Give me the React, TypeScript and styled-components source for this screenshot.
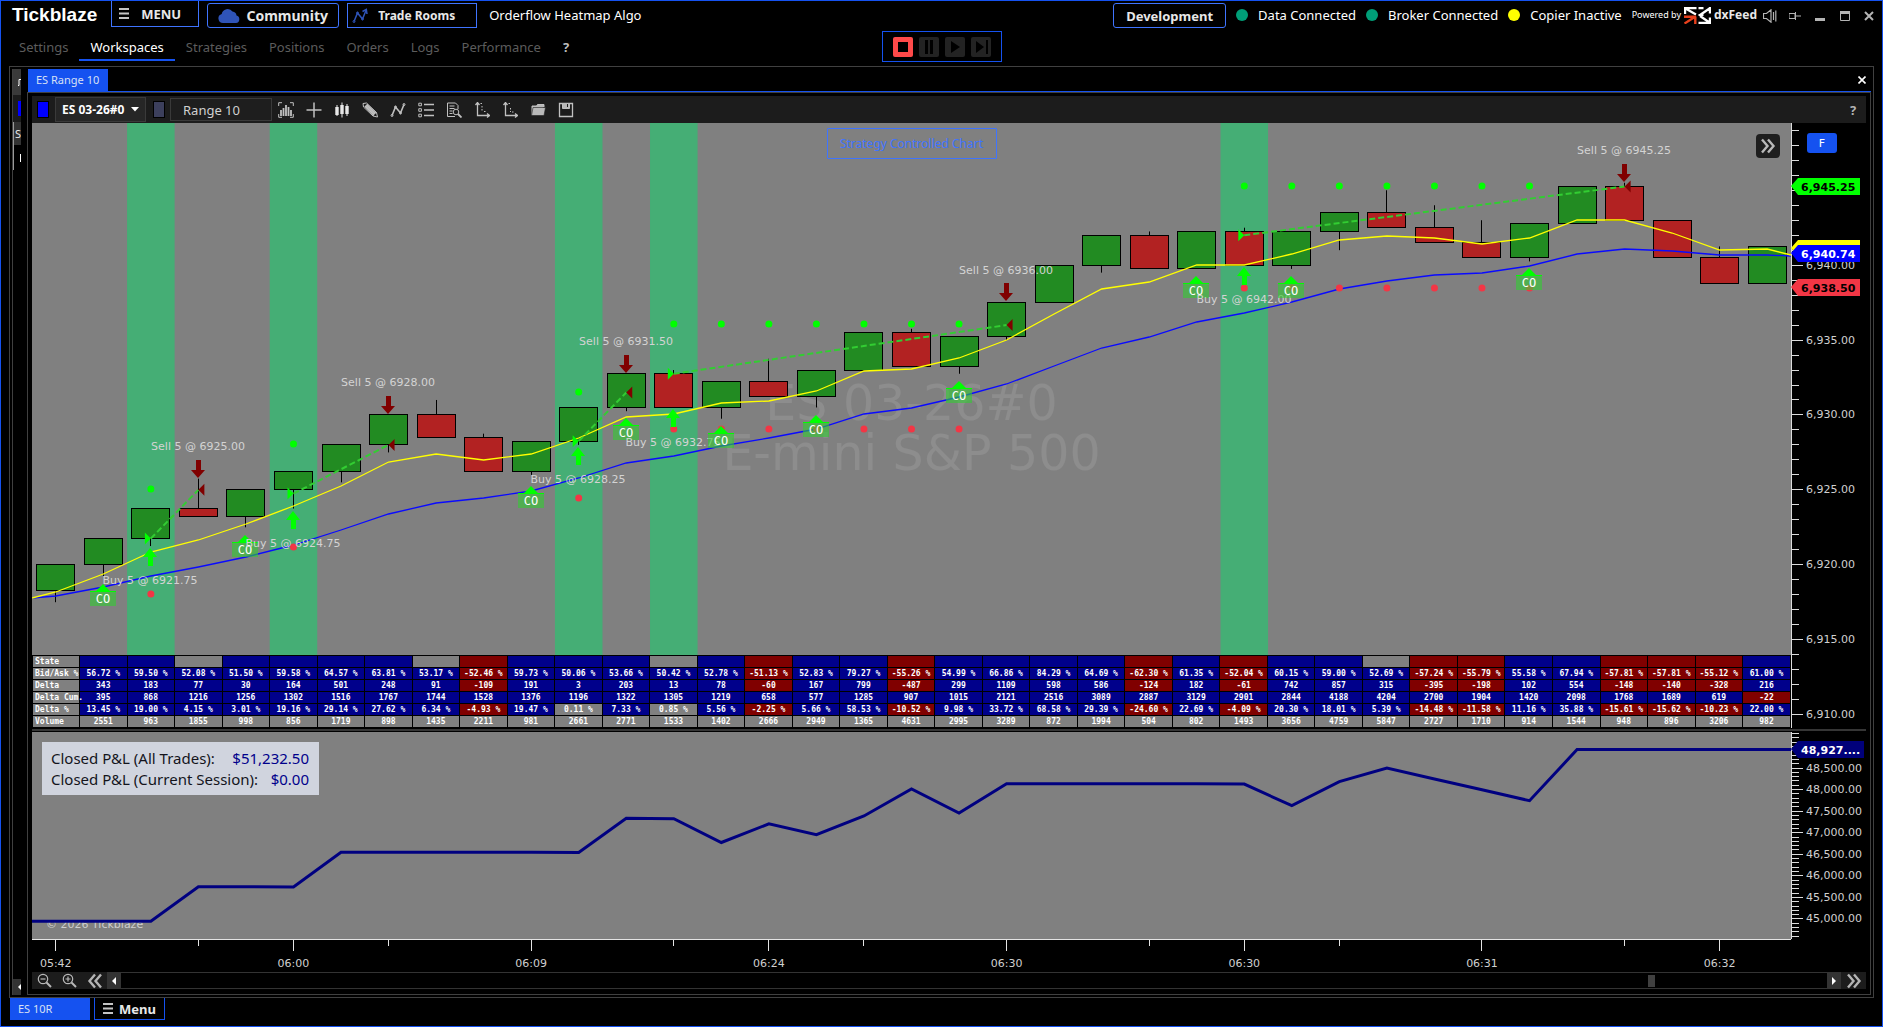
import React, { useLayoutEffect, useRef, useState } from "react";
import styled, { createGlobalStyle } from "styled-components";

const UI = `"Noto Sans", "Open Sans", sans-serif`;
const CHART = `"DejaVu Sans", Verdana, sans-serif`;
const BLUE = "#1552f0";
const EDGE = "#404040";

const GlobalStyle = createGlobalStyle`
  *, *::before, *::after { box-sizing: border-box; }
  body { margin: 0; background: #000; color: #e8e8e8; font: 13px/18px ${UI}; }
  button, input, select { font: inherit; color: inherit; margin: 0; }
  button { cursor: pointer; }
`;

/* ---------- window frame ---------- */

const Window = styled.div`
  display: flex;
  flex-direction: column;
  height: 100vh;
  min-width: 1200px;
  min-height: 600px;
  border: 1px solid ${BLUE};
  background: #000;
`;

const Header = styled.header`
  display: flex;
  align-items: flex-start;
  justify-content: space-between;
  height: 30px;
  padding: 0 3px 0 11px;
`;

const HeaderGroup = styled.div<{ $gap: number }>`
  display: flex;
  align-items: flex-start;
  gap: ${(p) => p.$gap}px;
`;

const Brand = styled.h1`
  margin: 0 6px 0 0;
  padding-top: 2px;
  font: bold 19px/24px "Liberation Sans", Arial, sans-serif;
  color: #fff;
`;

type HeaderButtonProps = { $size: number; $width: number; $gap?: number; $inset?: number; $radius?: number; $flush?: boolean };

const HeaderButton = styled.button<HeaderButtonProps>`
  display: flex;
  align-items: center;
  justify-content: ${(p) => (p.$inset ? "flex-start" : "center")};
  gap: ${(p) => p.$gap ?? 6}px;
  width: ${(p) => p.$width}px;
  height: ${(p) => (p.$flush ? 26 : 25)}px;
  margin-top: ${(p) => (p.$flush ? 0 : 2)}px;
  padding: 0 0 0 ${(p) => p.$inset ?? 0}px;
  border: 1px solid #3f74ff;
  border-top-width: ${(p) => (p.$flush ? 0 : 1)}px;
  border-radius: ${(p) => p.$radius ?? 0}px;
  background: #000;
  font-weight: 700;
  font-size: ${(p) => p.$size}px;
  white-space: nowrap;
`;

const Title = styled.span`
  padding: 5px 0 0 4px;
  color: #fff;
  white-space: nowrap;
`;

const Status = styled.span`
  display: flex;
  align-items: center;
  gap: 10px;
  height: 28px;
  color: #fff;
  white-space: nowrap;
`;

const Dot = styled.i<{ $color: string }>`
  width: 12px;
  height: 12px;
  border-radius: 50%;
  background: ${(p) => p.$color};
`;

const Powered = styled.span`
  display: flex;
  align-items: center;
  gap: 3px;
  height: 28px;
  font-size: 9px;
  color: #fff;
  white-space: nowrap;
  b { font-size: 12px; color: #e8e8e8; }
`;

const FeedGroup = styled.div`
  display: flex;
  gap: 2px;
`;

const WindowButtons = styled.div`
  display: flex;
  height: 30px;
`;

const GlyphButton = styled.button<{ $width: number }>`
  display: flex;
  align-items: center;
  justify-content: center;
  width: ${(p) => p.$width}px;
  padding: 0;
  border: 0;
  background: transparent;
  color: #b4b4b4;
`;

const NavRow = styled.div`
  display: grid;
  grid-template-columns: 1fr auto 1fr;
  height: 35px;
`;

const Nav = styled.nav`
  display: flex;
  align-items: flex-start;
  padding: 2px 0 0 7px;
`;

const NavLink = styled.a<{ $active?: boolean; $strong?: boolean }>`
  padding: 5px 11px 3px;
  border-bottom: 2px solid ${(p) => (p.$active ? BLUE : "transparent")};
  color: ${(p) => (p.$active ? "#fff" : p.$strong ? "#bdbdbd" : "#5c5c5c")};
  font-weight: ${(p) => (p.$strong ? 700 : 400)};
  text-decoration: none;
`;

const Transport = styled.div`
  display: flex;
  gap: 6px;
  height: 31px;
  padding: 5px 10px;
  border: 1px solid ${BLUE};
`;

const TransportButton = styled.button<{ $live?: boolean }>`
  width: 20px;
  height: 20px;
  padding: 0;
  border: 0;
  border-radius: 2px;
  background: ${(p) => (p.$live ? "#ff4a4a" : "#232323")};
  svg { display: block; }
`;

const Workspace = styled.main`
  display: flex;
  flex: 1;
  gap: 6px;
  min-height: 0;
  margin: 0 8px;
  padding: 2px;
  border: 1px solid ${EDGE};
`;

/* ---------- window tucked behind the chart ---------- */

const Behind = styled.aside`
  display: flex;
  flex-direction: column;
  width: 9px;
  overflow: hidden;
  border-left: 1px solid ${EDGE};
`;

const BehindCell = styled.div<{ $height: number; $bg: string; $line?: boolean }>`
  display: flex;
  align-items: center;
  justify-content: flex-end;
  height: ${(p) => p.$height}px;
  overflow: hidden;
  background: ${(p) => p.$bg};
  border-left: 1px solid ${(p) => (p.$line ? "#9a9a9a" : "transparent")};
  font-size: 11px;
`;

const BehindSwatch = styled.i`
  width: 3px;
  height: 15px;
  background: #00f;
`;

const BehindSpacer = styled.div`
  flex: 1;
`;

/* ---------- chart window ---------- */

const ChartWindow = styled.section`
  display: flex;
  flex: 1;
  flex-direction: column;
  min-width: 0;
`;

const TabBar = styled.div`
  display: flex;
  justify-content: space-between;
  height: 23px;
  margin-left: 1px;
  border-bottom: 1px solid ${BLUE};
`;

const Tab = styled.button<{ $width: number }>`
  width: ${(p) => p.$width}px;
  height: 22px;
  padding: 0 8px;
  border: 0;
  background: ${BLUE};
  color: #d8e0f4;
  font-size: 11px;
  text-align: left;
  white-space: nowrap;
`;

const ChartBody = styled.div`
  display: flex;
  flex: 1;
  flex-direction: column;
  min-height: 0;
  padding: 3px 4px 5px;
  border: 1px solid ${EDGE};
`;

const Toolbar = styled.div`
  display: flex;
  align-items: center;
  height: 27px;
  padding-left: 5px;
  background: #1c1c1c;
`;

const Swatch = styled.button<{ $color: string }>`
  width: 12px;
  height: 17px;
  padding: 0;
  border: 1px solid #000;
  background: ${(p) => p.$color};
`;

const SymbolBox = styled.label`
  display: flex;
  align-items: center;
  width: 91px;
  height: 25px;
  margin: 0 7px 0 6px;
  padding: 0 6px;
  border: 1px solid #3a3a3a;
  background: #262626;
  font-size: 12px;
`;

const SymbolSelect = styled.select`
  flex: 1;
  min-width: 0;
  padding: 0;
  border: 0;
  appearance: none;
  background: transparent;
  color: #fff;
  font-weight: 700;
`;

const RangeInput = styled.input`
  width: 102px;
  height: 23px;
  margin-left: 5px;
  padding: 0 12px;
  border: 1px solid #3a3a3a;
  background: #1e1e1e;
  color: #d0d0d0;
`;

const Tools = styled.div`
  display: flex;
  flex: 1;
  height: 100%;
`;

const Panes = styled.div`
  display: flex;
  flex: 1;
  flex-direction: column;
  min-height: 0;
`;

const Pane = styled.div<{ $grow: number }>`
  display: flex;
  flex: ${(p) => p.$grow} 1 0px;
  min-height: 0;
`;

const PlotColumn = styled.div`
  display: flex;
  flex: 1;
  flex-direction: column;
  min-width: 0;
`;

const Plot = styled.div`
  position: relative;
  flex: 1 1 0px;
  min-height: 0;
  overflow: hidden;
  background: #808080;
`;

const AxisBox = styled.div`
  position: relative;
  width: 75px;
  overflow: hidden;
`;

const Canvas = styled.svg`
  display: block;
  width: 100%;
  height: 100%;
  font: 11px ${CHART};
`;

const Splitter = styled.div`
  height: 4px;
  border: solid #000;
  border-width: 1px 0;
  background: #363636;
`;

const TimeAxis = styled.div`
  height: 33px;
  margin-right: 75px;
`;

const StrategyButton = styled.button`
  position: absolute;
  top: 5px;
  left: 50%;
  width: 170px;
  height: 31px;
  padding: 0;
  border: 1px solid #3f74ff;
  border-radius: 1px;
  background: transparent;
  color: #3f74ff;
  font-size: 12px;
  transform: translateX(-50%);
`;

const ExpandButton = styled.button`
  position: absolute;
  top: 11px;
  right: 11px;
  width: 24px;
  height: 24px;
  padding: 4px;
  border: 0;
  border-radius: 4px;
  background: #1e1e1e;
  color: #b8b8b8;
  svg { display: block; }
`;

const FixedButton = styled.button`
  position: absolute;
  top: 10px;
  left: 16px;
  width: 30px;
  height: 20px;
  padding: 0;
  border: 0;
  border-radius: 3px;
  background: ${BLUE};
  color: #fff;
  font-size: 11px;
`;

const Summary = styled.dl`
  position: absolute;
  top: 10px;
  left: 10px;
  width: 277px;
  margin: 0;
  padding: 6px 10px 5px 9px;
  background: #d0d4de;
  font-size: 15px;
  line-height: 21px;
`;

const SummaryRow = styled.div`
  display: flex;
  justify-content: space-between;
  color: #14141c;
  dd { margin: 0; color: #00008b; }
`;

const FlowTable = styled.table`
  width: 100%;
  table-layout: fixed;
  border-collapse: collapse;
  background: #000;
  color: #fff;
  font: bold 8px/11px "DejaVu Sans Mono", "Liberation Mono", monospace;
`;

const RowLabel = styled.th`
  width: 47px;
  height: 12px;
  padding: 0 0 0 2px;
  border: 1px solid #000;
  background: #808080;
  text-align: left;
  white-space: nowrap;
`;

const FlowCell = styled.td<{ $bg: string }>`
  height: 12px;
  padding: 0;
  border: 1px solid #000;
  background: ${(p) => p.$bg};
  text-align: center;
  white-space: nowrap;
`;

const ScrollRow = styled.div`
  display: flex;
  height: 17px;
  background: #1c1c1c;
`;

const ScrollTrack = styled.div`
  display: flex;
  flex: 1;
  align-items: center;
  justify-content: flex-end;
  padding-right: 172px;
  border: solid #333;
  border-width: 1px 0;
  background: #000;
`;

const ScrollThumb = styled.i`
  width: 7px;
  height: 12px;
  background: #404040;
`;

const Arrow = styled(GlyphButton)`
  background: #333;
  color: #fff;
`;

const Footer = styled.footer`
  display: flex;
  align-items: flex-start;
  gap: 4px;
  height: 28px;
  padding-left: 9px;
`;

const FooterMenu = styled.button`
  display: flex;
  align-items: center;
  justify-content: center;
  gap: 6px;
  width: 71px;
  height: 22px;
  padding: 0;
  border: 1px solid ${BLUE};
  border-top: 0;
  background: #000;
  font-weight: 700;
`;

/* ---------- data ---------- */

const COLUMNS = 37;
const TOP_PRICE = 6949.49;
const PX_PER_POINT = 14.98;
const TOP_PNL = 49334.5;
const PX_PER_DOLLAR = 0.04314;

const priceY = (price: number) => (TOP_PRICE - price) * PX_PER_POINT;
const pnlY = (value: number) => (TOP_PNL - value) * PX_PER_DOLLAR;

type Candle = { up: boolean; top: number; bottom: number; high?: number; low?: number };

const g = (top: number, bottom: number, low?: number): Candle => ({ up: true, top, bottom, low });
const r = (top: number, bottom: number, high?: number): Candle => ({ up: false, top, bottom, high });

const candles: Candle[] = [
  g(6920, 6918.25, 6917.5), g(6921.75, 6920, 6919.25), g(6923.75, 6921.75, 6921.25),
  r(6923.75, 6923.25, 6925.75), g(6925, 6923.25, 6922.5), g(6926.25, 6925, 6923.75),
  g(6928, 6926.25, 6925.5), g(6930, 6928, 6927.5), r(6930, 6928.5, 6931),
  r(6928.5, 6926.25, 6928.75), g(6928.25, 6926.25, 6926), g(6930.5, 6928.25, 6928),
  g(6932.75, 6930.5, 6930.25), r(6932.75, 6930.5, 6933), g(6932.25, 6930.5, 6929.75),
  r(6932.25, 6931.25, 6933.75), g(6933, 6931.25, 6930.5), g(6935.5, 6933),
  r(6935.5, 6933.25, 6935.75), g(6935.25, 6933.25, 6932.75), g(6937.5, 6935.25, 6935),
  g(6940, 6937.5), g(6942, 6940, 6939.5), r(6942, 6939.75, 6942.25),
  g(6942.25, 6939.75), r(6942.25, 6940, 6942.5), g(6942.25, 6940, 6939.75),
  g(6943.5, 6942.25, 6941), r(6943.5, 6942.5, 6945), r(6942.5, 6941.5, 6944),
  r(6941.5, 6940.5, 6943), g(6942.75, 6940.5, 6940.25), g(6945.25, 6942.75),
  r(6945.25, 6943, 6945.5), r(6943, 6940.5), r(6940.5, 6938.75, 6941.25),
  g(6941.25, 6938.75),
];

/* averages, in pixels below the top price; first and last points sit on the pane edges */
const fastAverage = [475, 469, 451, 429, 417, 401, 383, 363, 339, 331, 337, 331, 315, 294, 291, 280, 278, 268, 248, 246, 235, 217, 191, 166, 159, 142, 142, 131, 117, 113, 115, 121, 115, 97, 97, 110, 127, 126, 132];
const slowAverage = [475, 473, 464, 453, 444, 434, 422, 407, 391, 380, 375, 368, 355, 340, 333, 323, 315, 306, 291, 285, 274, 261, 243, 225, 214, 199, 190, 179, 166, 158, 152, 150, 143, 131, 126, 128, 132, 132, 133];

const trades = [
  { from: 2, entry: 6921.75, to: 3, exit: 6925 },
  { from: 5, entry: 6924.75, to: 7, exit: 6928 },
  { from: 11, entry: 6928.25, to: 12, exit: 6931.5 },
  { from: 13, entry: 6932.75, to: 20, exit: 6936 },
  { from: 25, entry: 6942, to: 33, exit: 6945.25 },
];

type Mark = { kind: "buy" | "sell" | "co"; at: number; y: number; label?: string; labelY?: number };

const marks: Mark[] = [
  { kind: "co", at: 1, y: 461 },
  { kind: "buy", at: 2, y: 425, label: "Buy 5 @ 6921.75", labelY: 457 },
  { kind: "sell", at: 3, y: 337, label: "Sell 5 @ 6925.00", labelY: 323 },
  { kind: "co", at: 4, y: 412 },
  { kind: "buy", at: 5, y: 388, label: "Buy 5 @ 6924.75", labelY: 420 },
  { kind: "sell", at: 7, y: 273, label: "Sell 5 @ 6928.00", labelY: 259 },
  { kind: "co", at: 10, y: 363 },
  { kind: "buy", at: 11, y: 324, label: "Buy 5 @ 6928.25", labelY: 356 },
  { kind: "sell", at: 12, y: 232, label: "Sell 5 @ 6931.50", labelY: 218 },
  { kind: "co", at: 12, y: 295 },
  { kind: "buy", at: 13, y: 286, label: "Buy 5 @ 6932.75", labelY: 319 },
  { kind: "co", at: 14, y: 303 },
  { kind: "co", at: 16, y: 292 },
  { kind: "co", at: 19, y: 258 },
  { kind: "sell", at: 20, y: 160, label: "Sell 5 @ 6936.00", labelY: 147 },
  { kind: "co", at: 24, y: 153 },
  { kind: "buy", at: 25, y: 144, label: "Buy 5 @ 6942.00", labelY: 176 },
  { kind: "co", at: 26, y: 153 },
  { kind: "co", at: 31, y: 145 },
  { kind: "sell", at: 33, y: 41, label: "Sell 5 @ 6945.25", labelY: 27 },
];

const span = (a: number, b: number) => Array.from({ length: b - a + 1 }, (_, i) => a + i);
const targets: [number, number][] = [[2, 366], [5, 321], [11, 269], ...span(13, 19).map((i): [number, number] => [i, 201]), ...span(25, 31).map((i): [number, number] => [i, 63])];
const stops: [number, number][] = [[2, 471], [5, 424], [11, 375], ...span(13, 19).map((i): [number, number] => [i, 306]), ...span(25, 31).map((i): [number, number] => [i, 165])];

const pnl = [44946, 44946, 44946, 45746, 45746, 45740, 46548, 46548, 46548, 46548, 46548, 46540, 47334, 47325, 46773, 47206, 46956, 47387, 48013, 47457, 48134, 48134, 48134, 48134, 48134, 48127, 47626, 48183, 48500, 48247, 47995, 47742, 48927.5, 48927.5, 48927.5, 48927.5, 48927.5];

const bidAsk = "56.72 59.50 52.08 51.50 59.58 64.57 63.81 53.17 -52.46 59.73 50.06 53.66 50.42 52.78 -51.13 52.83 79.27 -55.26 54.99 66.86 84.29 64.69 -62.30 61.35 -52.04 60.15 59.00 52.69 -57.24 -55.79 55.58 67.94 -57.81 -57.81 -55.12 61.00".split(" ");
const delta = "343 183 77 30 164 501 248 91 -109 191 3 203 13 78 -60 167 799 -487 299 1109 598 586 -124 182 -61 742 857 315 -395 -198 102 554 -148 -140 -328 216".split(" ");
const deltaCum = "395 868 1216 1256 1302 1516 1767 1744 1528 1376 1196 1322 1305 1219 658 577 1285 907 1015 2121 2516 3089 2887 3129 2901 2844 4188 4204 2700 1904 1420 2098 1768 1689 619 -22".split(" ");
const deltaPct = "13.45 19.00 4.15 3.01 19.16 29.14 27.62 6.34 -4.93 19.47 0.11 7.33 0.85 5.56 -2.25 5.66 58.53 -10.52 9.98 33.72 68.58 29.39 -24.60 22.69 -4.09 20.30 18.01 5.39 -14.48 -11.58 11.16 35.88 -15.61 -15.62 -10.23 22.00".split(" ");
const volume = "2551 963 1855 998 856 1719 898 1435 2211 981 2661 2771 1533 1402 2666 2949 1365 4631 2995 3289 872 1994 504 802 1493 3656 4759 5847 2727 1710 914 1544 948 896 3206 982".split(" ");
const neutralStates = [2, 7, 12, 27];

const GREY = "#808080";
const signColor = (v: string) => (v.startsWith("-") ? "#800000" : "#00008b");

const flowRows = [
  { name: "State", cells: bidAsk.map((v, i) => ({ text: "", bg: neutralStates.includes(i) ? GREY : signColor(v) })) },
  { name: "Bid/Ask %", cells: bidAsk.map((v) => ({ text: `${v} %`, bg: signColor(v) })) },
  { name: "Delta", cells: delta.map((v) => ({ text: v, bg: signColor(v) })) },
  { name: "Delta Cum.", cells: deltaCum.map((v) => ({ text: v, bg: signColor(v) })) },
  { name: "Delta %", cells: deltaPct.map((v) => ({ text: `${v} %`, bg: Math.abs(Number(v)) < 1 ? GREY : signColor(v) })) },
  { name: "Volume", cells: volume.map((v) => ({ text: v, bg: GREY })) },
];

const times = ["05:42", "06:00", "06:09", "06:24", "06:30", "06:30", "06:31", "06:32"];
const minorTimes = [3, 7, 13, 17, 23, 27, 33];

/* ---------- helpers ---------- */

function useSize<T extends HTMLElement>() {
  const ref = useRef<T>(null);
  const [size, setSize] = useState({ w: 0, h: 0 });
  useLayoutEffect(() => {
    const el = ref.current;
    if (!el) return;
    const read = () => setSize({ w: el.clientWidth, h: el.clientHeight });
    read();
    const observer = new ResizeObserver(read);
    observer.observe(el);
    return () => observer.disconnect();
  }, []);
  return { ref, ...size };
}

const columnX = (width: number) => (i: number) => ((i + 0.5) * width) / COLUMNS;
const snap = (v: number) => Math.round(v) + 0.5;
const commas = (v: number) => v.toLocaleString("en-US", { minimumFractionDigits: 2 });

/* ---------- icons ---------- */

const Bars = () => (
  <svg width="10" height="11" viewBox="0 0 10 11" aria-hidden>
    <path d="M0 1h10M0 5.500h10M0 10h10" stroke="#c4c4c4" strokeWidth="2" />
  </svg>
);

const Cloud = () => (
  <svg width="22" height="15" viewBox="0 0 22 15" aria-hidden>
    <path d="M5 15a4.600 4.600 0 0 1-1.300-9A6 6 0 0 1 14.500 3.500 4.600 4.600 0 0 1 18.500 7.400 3.900 3.900 0 0 1 18 15z" fill="#2f54b8" />
  </svg>
);

const Zigzag = ({ color }: { color: string }) => (
  <svg width="16" height="16" viewBox="0 0 16 16" fill="none" stroke={color} aria-hidden>
    <path d="M2 13.500 5.500 5l5 6L14 2.500" strokeWidth="1.500" />
    <path d="M10.500 3.500 14.300 1.500 15 6" strokeWidth="1.500" />
    <circle cx="2" cy="13.500" r="1" /><circle cx="5.500" cy="5" r="1" /><circle cx="10.500" cy="11" r="1" />
  </svg>
);

const FeedLogo = () => (
  <svg width="27" height="17" viewBox="0 0 27 17" aria-hidden>
    <g fill="none" stroke="#fff" strokeWidth="2.200">
      <path d="M0 1.100h12.500M1.100 1v6M1.500 1.500l10.500 6" />
      <path d="M14.500 1.100h5M25.900 0v6.500M25.500 1.500 16 8M14.500 8h5M16 9l9.500 6.500M25.900 10.500V17M14.500 15.900h11" />
    </g>
    <path d="M.5 16.500 11.500 9.500M0 9.800h12M11.300 9.500V17" fill="none" stroke="#e8401c" strokeWidth="2.400" />
  </svg>
);

const Speaker = () => (
  <svg width="14" height="14" viewBox="0 0 14 14" fill="none" stroke="#b4b4b4" strokeWidth="1.200" aria-hidden>
    <path d="M.5 4.500h3L8 .8v12.400L3.500 9.500h-3zM10.500 3v8M12.800 1.500v11" />
  </svg>
);

const ChevronsRight = ({ flip }: { flip?: boolean }) => (
  <svg width="16" height="16" viewBox="0 0 16 16" fill="none" stroke="currentColor" strokeWidth="2.400" aria-hidden>
    <path d={flip ? "M8 1.500 2.500 8 8 14.500M14 1.500 8.500 8l5.500 6.500" : "M2 1.500 7.500 8 2 14.500M8 1.500 13.500 8 8 14.500"} />
  </svg>
);

const Magnifier = ({ plus }: { plus?: boolean }) => (
  <svg width="15" height="15" viewBox="0 0 15 15" fill="none" stroke="#b8b8b8" aria-hidden>
    <circle cx="6" cy="6" r="4.700" strokeWidth="1.200" />
    <path d="m9.500 9.500 4.500 4.500" strokeWidth="2" />
    <path d={plus ? "M3.500 6h5M6 3.500v5" : "M3.500 6h5"} strokeWidth="1.200" />
  </svg>
);

const toolIcons: { name: string; art: React.ReactNode }[] = [
  { name: "Chart style", art: <><path d="M.7 4V.7H4M12 .7h3.300V4M.7 12v3.300H4M12 15.300h3.300V12" /><path d="M3 14V8M5.500 14V6M8 14V3M10.500 14V5M13 14V8" strokeWidth="1.800" /></> },
  { name: "Crosshair", art: <path d="M8 .5v15M.5 8h15" strokeWidth="1.500" /> },
  { name: "Bars", art: <g stroke="#e8e8e8"><path d="M3 3v11M8 .5v15M13 2v12" /><path d="M3 5v8M8 3v9M13 4v8" strokeWidth="3.400" /></g> },
  { name: "Draw", art: <><path d="M1 1.500 4.500 1l10 9.500 1 4.500-4.500-1L1.500 5z" /><path d="m3 4 9 9M4.500 2.500l9 9" strokeWidth="2" /><path d="M11 14c0-2 2-3.500 3.500-3.500" /></> },
  { name: "Indicators", art: <><path d="M2 13.500 5.500 5l5 6L14 2.500" strokeWidth="1.600" /><circle cx="2" cy="13.500" r="1" /><circle cx="5.500" cy="5" r="1" /><circle cx="10.500" cy="11" r="1" /><circle cx="14" cy="2.500" r="1" /></> },
  { name: "Object list", art: <><path d="M6 2.500h10M6 8h10M6 13.500h10" strokeWidth="1.500" /><path d="M.8 1.200h2.600v2.600H.8zM.8 6.700h2.600v2.600H.8zM.8 12.200h2.600v2.600H.8z" /></> },
  { name: "Data box", art: <><path d="M12 7V3.500L9.500 1H1.500v13.500H9" /><path d="M3.500 4h5M3.500 6.500h5M3.500 9h3M3.500 11.500h3" /><circle cx="10" cy="10" r="2.800" /><path d="m12 12 3.500 3.500" strokeWidth="1.800" /></> },
  { name: "Fit axis", art: <><path d="M3.500 1v12.500H15M1.500 3l2-2.500 2 2.500M13 11.500l2.500 2-2.500 2" strokeWidth="1.300" /><path d="M6.500 1.500H9M8 4v5M10 9.500h3" strokeDasharray="1.500 1.500" /></> },
  { name: "Lock axis", art: <><path d="M3.500 1v12.500H15M1.500 3l2-2.500 2 2.500M13 11.500l2.500 2-2.500 2" strokeWidth="1.300" /><path d="M6.500 1.500H9M8.500 6v4M10 10h3" strokeDasharray="1.500 1.500" /></> },
  { name: "Open", art: <><path d="M2 13V4h4.500l1-1.500H14V5" fill="#b8b8b8" /><path d="M1.500 13.500 3 5.500h12.500l-1.500 8z" fill="#b8b8b8" stroke="#1c1c1c" strokeWidth="0.600" /></> },
  { name: "Save", art: <><path d="M1.500 1.500h13v13h-13z" strokeWidth="1.300" /><path d="M4.500 1.500v5h7v-5" fill="#b8b8b8" /><path d="M9.500 2v3" stroke="#1c1c1c" /></> },
];

/* ---------- price pane ---------- */

const MarkShape = ({ mark, x }: { mark: Mark; x: number }) => {
  if (mark.kind === "co") {
    return (
      <g>
        <rect x={x - 13} y={mark.y + 7} width="26" height="15" fill="#32cd32" fillOpacity="0.6" />
        <path d={`M${x} ${mark.y}l7 7h6v1h-26v-1h6z`} fill="#0f0" />
        <text x={x} y={mark.y + 19} fill="#fff" textAnchor="middle" fontFamily="DejaVu Sans Mono, monospace" fontSize="12">CO</text>
      </g>
    );
  }
  const buy = mark.kind === "buy";
  return (
    <g>
      <path
        d={buy ? `M${x} ${mark.y}l7 9h-4v9h-5v-9h-5z` : `M${x - 2} ${mark.y}h5v10h4l-7 8-7-8h5z`}
        fill={buy ? "#0f0" : "#800000"}
      />
      <text x={x} y={(mark.labelY ?? 0) + 4} fill="#d3d3d3" textAnchor="middle">{mark.label}</text>
    </g>
  );
};

const PricePlot = () => {
  const { ref, w } = useSize<HTMLDivElement>();
  const x = columnX(w);
  const column = w / COLUMNS;
  const line = (ys: number[]) =>
    ys.map((y, i) => `${i === 0 ? 0 : i === ys.length - 1 ? w : x(i - 1)},${y}`).join(" ");
  return (
    <Plot ref={ref}>
      <Canvas role="img" aria-label="ES 03-26 range chart">
        {trades.map((t) => (
          <rect key={t.from} x={x(t.from) - column / 2} width={column} height="100%" fill="#45ae75" />
        ))}
        <g fill="#fff" fillOpacity="0.1" fontSize="49" textAnchor="middle">
          <text x={w / 2} y="297">ES 03-26#0</text>
          <text x={w / 2} y="347">E-mini S&amp;P 500</text>
        </g>
        {candles.map((c, i) => {
          const cx = snap(x(i) - 0.5);
          const top = snap(priceY(c.top) - 0.5);
          const bottom = snap(priceY(c.bottom) - 0.5);
          return (
            <g key={i} stroke="#000">
              {c.high && <path d={`M${cx} ${priceY(c.high)}V${top}`} />}
              {c.low && <path d={`M${cx} ${bottom}V${priceY(c.low)}`} />}
              <rect x={cx - 19} y={top} width="38" height={bottom - top} fill={c.up ? "#228b22" : "#b22222"} />
            </g>
          );
        })}
        <polyline points={line(slowAverage)} fill="none" stroke="#0a0aff" strokeWidth="1.300" />
        <polyline points={line(fastAverage)} fill="none" stroke="#ff0" strokeWidth="1.300" />
        {targets.map(([i, y]) => <circle key={i} cx={x(i)} cy={y} r="3.500" fill="#0f0" />)}
        {stops.map(([i, y]) => <circle key={i} cx={x(i)} cy={y} r="3.500" fill="#f23645" />)}
        {trades.map((t) => {
          const y1 = priceY(t.entry);
          const y2 = priceY(t.exit);
          return (
            <g key={t.from}>
              <path d={`M${x(t.from)} ${y1}L${x(t.to)} ${y2}`} stroke="#32cd32" strokeWidth="2" strokeDasharray="6 3" />
              <path d={`M${x(t.from) - 6} ${y1 - 6}l6 6-6 6z`} fill="#0f0" />
              <path d={`M${x(t.to) + 6} ${y2 - 6}l-6 6 6 6z`} fill="#800000" />
            </g>
          );
        })}
        {marks.map((m, i) => <MarkShape key={i} mark={m} x={Math.floor(x(m.at))} />)}
      </Canvas>
      <StrategyButton type="button">Strategy Controlled Chart</StrategyButton>
      <ExpandButton type="button" aria-label="Expand"><ChevronsRight /></ExpandButton>
    </Plot>
  );
};

type BadgeProps = { y: number; text?: string; fill: string; color?: string; width?: number };

const Badge = ({ y, text, fill, color, width = 69 }: BadgeProps) => (
  <g>
    <path d={`M0 ${y}l7-8H${width}v17H7z`} fill={fill} />
    {text && <text x="10" y={y + 5} fill={color} fontWeight="bold">{text}</text>}
  </g>
);

type AxisProps = { step: number; labelStep: number; last: number; toY: (v: number) => number; from: number; children: React.ReactNode };

const Axis = ({ step, labelStep, last, toY, from, children }: AxisProps) => {
  const { ref, h } = useSize<HTMLDivElement>();
  const ticks: number[] = [];
  for (let v = from; v >= last && toY(v) < h - 1; v -= step) ticks.push(v);
  return (
    <AxisBox ref={ref}>
      <Canvas aria-label="Value scale">
        <path d={`M.5 0V${h}`} stroke="#dcdcdc" />
        {ticks.map((v) => {
          const y = snap(toY(v) - 0.5);
          const major = v % labelStep === 0;
          return (
            <g key={v}>
              <path d={`M1 ${y}h${major ? 11 : 7}`} stroke="#dcdcdc" />
              {major && <text x="15" y={Math.round(y) + 3} fill="#d0d0d0">{commas(v)}</text>}
            </g>
          );
        })}
        {children}
      </Canvas>
    </AxisBox>
  );
};

/* ---------- profit pane ---------- */

const ProfitPlot = () => {
  const { ref, w } = useSize<HTMLDivElement>();
  const x = columnX(w);
  const points = [`0,${pnlY(pnl[0])}`, ...pnl.map((v, i) => `${x(i)},${pnlY(v)}`), `${w},${pnlY(pnl[pnl.length - 1])}`];
  return (
    <Plot ref={ref}>
      <Canvas role="img" aria-label="Closed profit and loss">
        <text x="14" y="196" fill="#cfcfcf">© 2026 Tickblaze</text>
        <polyline points={points.join(" ")} fill="none" stroke="#000080" strokeWidth="3" />
      </Canvas>
      <Summary>
        <SummaryRow><dt>Closed P&amp;L (All Trades):</dt><dd>$51,232.50</dd></SummaryRow>
        <SummaryRow><dt>Closed P&amp;L (Current Session):</dt><dd>$0.00</dd></SummaryRow>
      </Summary>
    </Plot>
  );
};

const Times = () => {
  const { ref, w } = useSize<HTMLDivElement>();
  const x = columnX(w);
  return (
    <TimeAxis ref={ref}>
      <Canvas aria-label="Time scale">
        <g stroke="#e4e4e4">
          <path d={`M0 .5H${w}`} />
          {times.map((_, i) => <path key={i} d={`M${snap(x(i * 5) - 0.5)} 0v12`} />)}
          {minorTimes.map((i) => <path key={i} d={`M${snap(x(i) - 0.5)} 0v7`} />)}
        </g>
        {times.map((t, i) => (
          <text key={i} x={x(i * 5)} y="28" fill="#d0d0d0" textAnchor="middle">{t}</text>
        ))}
      </Canvas>
    </TimeAxis>
  );
};

const OrderFlow = () => (
  <FlowTable>
    <tbody>
      {flowRows.map((row) => (
        <tr key={row.name}>
          <RowLabel scope="row">{row.name}</RowLabel>
          {row.cells.map((c, i) => <FlowCell key={i} $bg={c.bg}>{c.text}</FlowCell>)}
        </tr>
      ))}
    </tbody>
  </FlowTable>
);

/* ---------- page ---------- */

const navItems = ["Settings", "Workspaces", "Strategies", "Positions", "Orders", "Logs", "Performance", "?"];

const TitleBar = () => (
  <Header>
    <HeaderGroup $gap={8}>
      <Brand>Tickblaze</Brand>
      <HeaderButton type="button" $size={13} $width={88} $gap={12} $inset={7} $flush><Bars />MENU</HeaderButton>
      <HeaderButton type="button" $size={14} $width={132} $radius={3}><Cloud />Community</HeaderButton>
      <HeaderButton type="button" $size={12} $width={130} $gap={10} $inset={4}><Zigzag color="#2f54b8" />Trade Rooms</HeaderButton>
      <Title>Orderflow Heatmap Algo</Title>
    </HeaderGroup>
    <HeaderGroup $gap={10}>
      <HeaderButton type="button" $size={13} $width={113} $radius={3}>Development</HeaderButton>
      <Status><Dot $color="#009f78" />Data Connected</Status>
      <Status><Dot $color="#009f78" />Broker Connected</Status>
      <Status><Dot $color="#ff0" />Copier Inactive</Status>
      <FeedGroup>
        <Powered>Powered by<FeedLogo /><b>dxFeed</b></Powered>
        <WindowButtons>
          <GlyphButton type="button" $width={22} aria-label="Sound"><Speaker /></GlyphButton>
          <GlyphButton type="button" $width={28} aria-label="Pin">
            <svg width="12" height="8" viewBox="0 0 12 8" fill="none" stroke="currentColor"><path d="M0 1.500h6v5H0zM6.500 0v8M7 4h5" /></svg>
          </GlyphButton>
          <GlyphButton type="button" $width={22} aria-label="Minimise">
            <svg width="10" height="10" viewBox="0 0 10 10"><path d="M0 8.500h10" stroke="currentColor" strokeWidth="3" /></svg>
          </GlyphButton>
          <GlyphButton type="button" $width={28} aria-label="Maximise">
            <svg width="10" height="10" viewBox="0 0 10 10" fill="none" stroke="currentColor"><path d="M.5.5h9v9h-9z" /><path d="M0 1.500h10" strokeWidth="3" /></svg>
          </GlyphButton>
          <GlyphButton type="button" $width={20} aria-label="Close">
            <svg width="10" height="10" viewBox="0 0 10 10" stroke="currentColor" strokeWidth="2"><path d="m1 1 8 8M9 1 1 9" /></svg>
          </GlyphButton>
        </WindowButtons>
      </FeedGroup>
    </HeaderGroup>
  </Header>
);

const Controls = () => (
  <Transport>
    <TransportButton type="button" $live aria-label="Stop">
      <svg width="20" height="20"><path d="M5 5h10v10H5z" fill="#000" /></svg>
    </TransportButton>
    <TransportButton type="button" aria-label="Pause">
      <svg width="20" height="20"><path d="M6 3h3v14H6zM11 3h3v14h-3z" fill="#000" /></svg>
    </TransportButton>
    <TransportButton type="button" aria-label="Play">
      <svg width="20" height="20"><path d="m6 4 9 6-9 6z" fill="#000" /></svg>
    </TransportButton>
    <TransportButton type="button" aria-label="Step">
      <svg width="20" height="20"><path d="m5 4 8 6-8 6zM15 3h2v14h-2z" fill="#000" /></svg>
    </TransportButton>
  </Transport>
);

const ChartToolbar = () => (
  <Toolbar>
    <Swatch type="button" $color="#00f" aria-label="Link colour" />
    <SymbolBox>
      <SymbolSelect aria-label="Symbol" defaultValue="ES 03-26#0"><option>ES 03-26#0</option></SymbolSelect>
      <svg width="8" height="5" viewBox="0 0 8 5" aria-hidden><path d="M0 0h8L4 4.500z" fill="#fff" /></svg>
    </SymbolBox>
    <Swatch type="button" $color="#3c3f5c" aria-label="Interval link colour" />
    <RangeInput aria-label="Interval" defaultValue="Range 10" />
    <Tools>
      {toolIcons.map((t) => (
        <GlyphButton key={t.name} type="button" $width={28} aria-label={t.name}>
          <svg width="16" height="16" viewBox="0 0 16 16" fill="none" stroke="#c0c0c0">{t.art}</svg>
        </GlyphButton>
      ))}
    </Tools>
    <GlyphButton type="button" $width={26}><b>?</b></GlyphButton>
  </Toolbar>
);

export default function App() {
  return (
    <Window>
      <GlobalStyle />
      <TitleBar />
      <NavRow>
        <Nav>
          {navItems.map((n) => (
            <NavLink key={n} href="#" $active={n === "Workspaces"} $strong={n === "?"}>{n}</NavLink>
          ))}
        </Nav>
        <Controls />
      </NavRow>
      <Workspace>
        <Behind aria-hidden>
          <BehindCell $height={26} $bg="#3a3a3a">
            <svg width="3" height="7" viewBox="0 0 3 7"><path d="M3 .5H1v6H0" fill="none" stroke="#fff" /></svg>
          </BehindCell>
          <BehindCell $height={27} $bg="#1c1c1c"><BehindSwatch /></BehindCell>
          <BehindCell $height={23} $bg="#333" $line>S</BehindCell>
          <BehindCell $height={25} $bg="#000" $line>
            <svg width="1" height="8"><path d="M.5 0v8" stroke="#fff" /></svg>
          </BehindCell>
          <BehindSpacer />
          <BehindCell $height={16} $bg="#333">
            <svg width="3" height="6"><path d="M3 0v6L0 3z" fill="#fff" /></svg>
          </BehindCell>
        </Behind>
        <ChartWindow>
          <TabBar>
            <Tab type="button" $width={80}>ES Range 10</Tab>
            <GlyphButton type="button" $width={18} aria-label="Close chart">
              <svg width="8" height="8" viewBox="0 0 8 8" stroke="#fff" strokeWidth="1.600"><path d="m.5.5 7 7M7.500.5l-7 7" /></svg>
            </GlyphButton>
          </TabBar>
          <ChartBody>
            <ChartToolbar />
            <Panes>
              <Pane $grow={605}>
                <PlotColumn>
                  <PricePlot />
                  <OrderFlow />
                </PlotColumn>
                <Axis from={6949} last={6900} step={1} labelStep={5} toY={priceY}>
                  <Badge y={125} fill="#ff0" />
                  <Badge y={130} text="6,940.74" fill="#00f" color="#fff" />
                  <Badge y={63} text="6,945.25" fill="#0f0" color="#000" />
                  <Badge y={164} text="6,938.50" fill="#f23645" color="#000" />
                  <foreignObject x="0" y="0" width="75" height="40">
                    <FixedButton type="button">F</FixedButton>
                  </foreignObject>
                </Axis>
              </Pane>
              <Splitter />
              <Pane $grow={207}>
                <PlotColumn><ProfitPlot /></PlotColumn>
                <Axis from={49300} last={44000} step={100} labelStep={500} toY={pnlY}>
                  <Badge y={17} text="48,927...." fill="#00007a" color="#fff" width={73} />
                </Axis>
              </Pane>
              <Times />
            </Panes>
            <ScrollRow>
              <GlyphButton type="button" $width={25} aria-label="Zoom out"><Magnifier /></GlyphButton>
              <GlyphButton type="button" $width={25} aria-label="Zoom in"><Magnifier plus /></GlyphButton>
              <GlyphButton type="button" $width={25} aria-label="First bar"><ChevronsRight flip /></GlyphButton>
              <Arrow type="button" $width={14} aria-label="Scroll left">
                <svg width="4" height="8"><path d="M4 0v8L0 4z" fill="#fff" /></svg>
              </Arrow>
              <ScrollTrack><ScrollThumb /></ScrollTrack>
              <Arrow type="button" $width={14} aria-label="Scroll right">
                <svg width="4" height="8"><path d="M0 0v8l4-4z" fill="#fff" /></svg>
              </Arrow>
              <GlyphButton type="button" $width={25} aria-label="Last bar"><ChevronsRight /></GlyphButton>
            </ScrollRow>
          </ChartBody>
        </ChartWindow>
      </Workspace>
      <Footer>
        <Tab type="button" $width={80}>ES 10R</Tab>
        <FooterMenu type="button"><Bars />Menu</FooterMenu>
      </Footer>
    </Window>
  );
}
